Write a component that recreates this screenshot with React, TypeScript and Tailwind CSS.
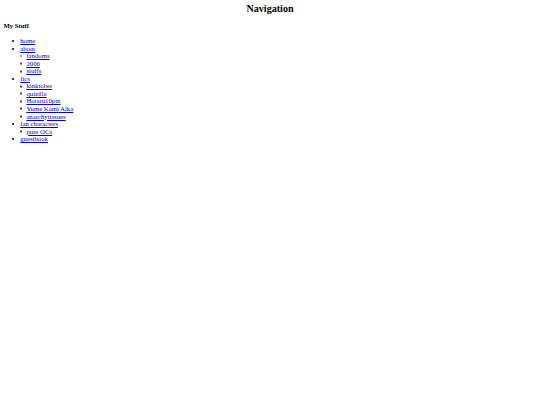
type Item = { label: string; children?: string[] };

const ITEMS: Item[] = [
  { label: 'home' },
  { label: 'about', children: ['fandoms', '2006', 'stuffs'] },
  { label: 'fics', children: ['kinktober', 'quizilla', 'Hotaru10pin', 'Yume Kami Aika', 'anarchytissues'] },
  { label: 'fan characters', children: ['pure OCs'] },
  { label: 'guestbook' },
];

function NavLink({ label }: { label: string }) {
  return (
    <a href="#" className="text-[#0000EE] underline decoration-[0.5px] underline-offset-[1px] whitespace-nowrap">
      {label}
    </a>
  );
}

export default function App() {
  return (
    <div className="min-h-screen bg-white text-black font-['Liberation_Serif','Times_New_Roman',serif] text-[6.75px] leading-[7.54px]">
      <div className="px-[3.4px] pt-[3.4px]">
        <h2 className="text-center text-[10.1px] leading-[11.6px] font-bold">Navigation</h2>
        <h4 className="mt-[7.3px] text-[6.75px] leading-[7.54px] font-bold">My Stuff</h4>

        <ul className="mt-[7.4px] pl-[9px]">
          {ITEMS.map(item => (
            <li key={item.label}>
              <div className="flex items-center h-[7.54px]">
                <span className="w-[2px] h-[2px] rounded-full bg-black mr-[5.85px] shrink-0" />
                <NavLink label={item.label} />
              </div>
              {item.children && (
                <ul className="pl-[7.3px]">
                  {item.children.map(c => (
                    <li key={c} className="flex items-center h-[7.54px]">
                      <span className="w-[2.8px] h-[2.8px] rounded-full border-[0.6px] border-[#555] mr-[3.9px] shrink-0" />
                      <NavLink label={c} />
                    </li>
                  ))}
                </ul>
              )}
            </li>
          ))}
        </ul>
      </div>
    </div>
  );
}
